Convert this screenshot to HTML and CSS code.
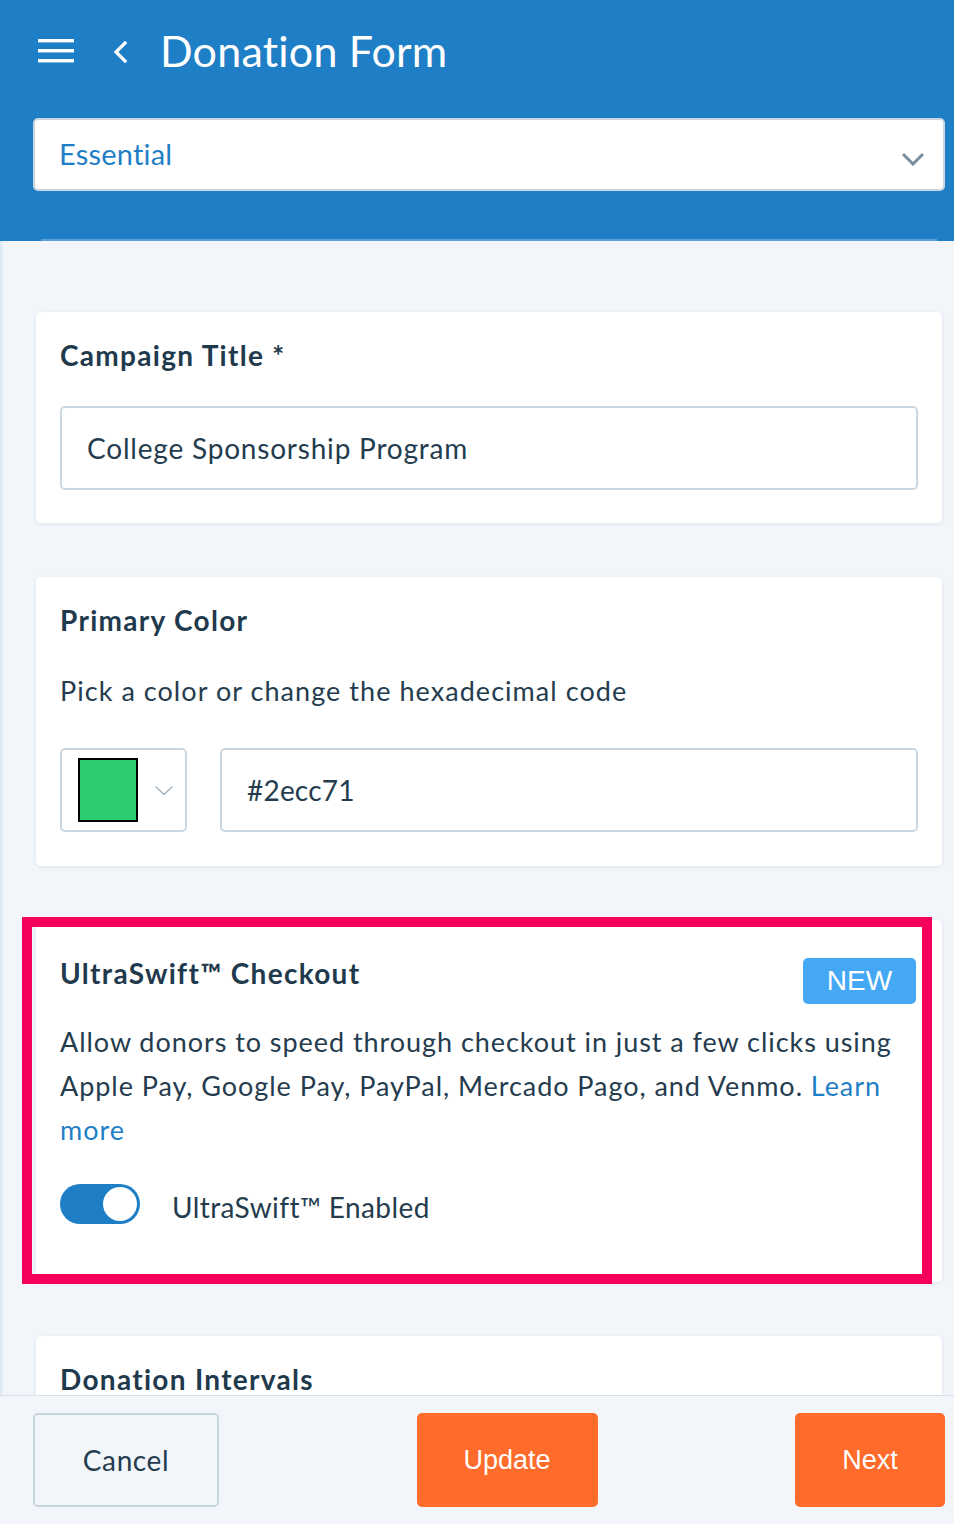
FILE: index.html
```html
<!DOCTYPE html>
<html lang="en">
<head>
<meta charset="utf-8">
<title>Donation Form</title>
<link rel="stylesheet" href="styles.css">
</head>
<body>
<header class="topbar">
  <div class="topbar-row">
    <button class="icon-btn menu" aria-label="Menu">
      <svg width="36" height="24" viewBox="0 0 36 24"><rect x="0" y="0" width="36" height="3.4" fill="#fff"/><rect x="0" y="10" width="36" height="3.4" fill="#fff"/><rect x="0" y="20" width="36" height="3.4" fill="#fff"/></svg>
    </button>
    <button class="icon-btn back" aria-label="Back">
      <svg width="16" height="22" viewBox="0 0 16 22"><path d="M13 2 L4 11 L13 20" fill="none" stroke="#fff" stroke-width="3.2" stroke-linecap="square"/></svg>
    </button>
    <h1 class="page-title">Donation Form</h1>
  </div>
  <div class="plan-select">
    <span class="plan-value">Essential</span>
    <svg class="plan-chevron" width="24" height="14" viewBox="0 0 24 14"><path d="M2 2 L12 12 L22 2" fill="none" stroke="#7b8d9b" stroke-width="3"/></svg>
  </div>
  <div class="topbar-edge"></div>
</header>

<main class="content">
  <section class="card">
    <h2 class="card-title">Campaign Title *</h2>
    <div class="text-input gap-input">College Sponsorship Program</div>
  </section>

  <section class="card card-color">
    <h2 class="card-title">Primary Color</h2>
    <p class="card-desc">Pick a color or change the hexadecimal code</p>
    <div class="color-row">
      <div class="swatch-picker">
        <span class="swatch"></span>
        <svg width="20" height="11" viewBox="0 0 20 11"><path d="M1.5 1.5 L10 9.5 L18.5 1.5" fill="none" stroke="#a3b3c0" stroke-width="1.6"/></svg>
      </div>
      <div class="text-input hex-input">#2ecc71</div>
    </div>
  </section>

  <section class="card card-featured">
    <div class="card-head">
      <h2 class="card-title">UltraSwift™ Checkout</h2>
      <span class="badge">NEW</span>
    </div>
    <p class="card-desc wrap">Allow donors to speed through checkout in just a few clicks using Apple Pay, Google Pay, PayPal, Mercado Pago, and Venmo. <a class="link" href="#">Learn more</a></p>
    <div class="toggle-row">
      <span class="toggle"><span class="knob"></span></span>
      <span class="toggle-label">UltraSwift™ Enabled</span>
    </div>
    <div class="highlight"></div>
  </section>

  <section class="card card-last">
    <h2 class="card-title">Donation Intervals</h2>
  </section>
</main>

<footer class="actions">
  <button class="btn btn-outline">Cancel</button>
  <button class="btn btn-primary btn-update">Update</button>
  <button class="btn btn-primary btn-next">Next</button>
</footer>
</body>
</html>
```
FILE: styles.css
```css
* { box-sizing: border-box; }
html, body { margin: 0; padding: 0; }
body {
  background: #f2f6fa;
  font-family: Lato, "Noto Sans", sans-serif;
  color: #1f3a4d;
  width: 954px;
  min-height: 1524px;
  overflow: hidden;
  box-shadow: inset 3px 0 3px -1px #d9e6f3;
}

.topbar {
  background: #1f7fc6;
  height: 241px;
  padding: 0 9px 0 33px;
  display: flex;
  flex-direction: column;
  position: relative;
}
.topbar-row {
  height: 102px;
  display: flex;
  align-items: center;
}
.icon-btn {
  background: none;
  border: 0;
  padding: 0;
  display: flex;
  align-items: center;
}
.menu { margin-left: 5px; }
.back { margin-left: 38px; margin-top: 1px; }
.page-title {
  margin: -2px 0 0 32px;
  font-weight: 400;
  font-size: 43px;
  color: #fff;
  line-height: 1;
  letter-spacing: 0.2px;
}
.plan-select {
  margin-top: 16px;
  height: 73px;
  background: #fff;
  border: 2px solid #c9d6e1;
  border-radius: 5px;
  display: flex;
  align-items: center;
  justify-content: space-between;
  padding: 0 18px 0 24px;
}
.plan-value {
  color: #1f7fc6;
  font-size: 29px;
  margin-top: -2px;
  letter-spacing: 0.2px;
}
.plan-chevron { margin-top: 8px; }
.topbar-edge {
  position: absolute;
  left: 41px;
  right: 17px;
  bottom: 0;
  height: 2px;
  background: #5d9fd6;
}

.content {
  padding: 71px 12px 200px 36px;
  display: flex;
  flex-direction: column;
  gap: 54px;
}
.card {
  background: #fff;
  border-radius: 5px;
  box-shadow: 0 1px 4px rgba(120, 150, 180, 0.18);
  padding: 26px 24px 33px 24px;
  position: relative;
}
.card-title {
  margin: 0;
  font-size: 28px;
  line-height: 34px;
  font-weight: 700;
  color: #1f3a4d;
  letter-spacing: 1.3px;
}
.text-input {
  height: 84px;
  border: 2px solid #cbd8e2;
  border-radius: 5px;
  background: #fff;
  display: flex;
  align-items: center;
  padding-left: 25px;
  font-size: 28px;
  color: #243c4e;
  letter-spacing: 0.8px;
}
.gap-input { margin-top: 34px; }

.card-desc {
  margin: 32px 0 0 0;
  font-size: 27px;
  line-height: 44px;
  color: #243c4e;
  letter-spacing: 1.05px;
}
.card-color { padding-bottom: 34px; }
.color-row {
  margin-top: 35px;
  display: flex;
  gap: 33px;
}
.swatch-picker {
  width: 127px;
  height: 84px;
  border: 2px solid #cbd8e2;
  border-radius: 5px;
  display: flex;
  align-items: center;
  padding-left: 16px;
  gap: 16px;
}
.swatch {
  width: 60px;
  height: 64px;
  background: #2ecc71;
  border: 2px solid #000;
}
.hex-input { flex: 1; letter-spacing: 0.2px; }

.card-featured { padding-top: 36px; padding-bottom: 58px; }
.card-head {
  display: flex;
  justify-content: space-between;
  align-items: flex-start;
}
.badge {
  margin-top: 2px;
  margin-right: 2px;
  width: 113px;
  height: 46px;
  background: #44a8f5;
  color: #fff;
  border-radius: 5px;
  font-family: "Liberation Sans", Arial, sans-serif;
  font-size: 28px;
  display: flex;
  align-items: center;
  justify-content: center;
}
.card-desc.wrap { margin-top: 16px; letter-spacing: 0.95px; }
.link { color: #1f7fc6; text-decoration: none; }
.toggle-row {
  margin-top: 32px;
  display: flex;
  align-items: center;
  gap: 32px;
}
.toggle {
  width: 80px;
  height: 40px;
  border-radius: 20px;
  background: #1f7fc6;
  display: flex;
  align-items: center;
  justify-content: flex-end;
  padding-right: 3px;
}
.knob {
  width: 34px;
  height: 34px;
  border-radius: 50%;
  background: #fff;
}
.toggle-label {
  font-size: 28px;
  color: #243c4e;
  letter-spacing: 0.4px;
  margin-top: 6px;
}
.highlight {
  position: absolute;
  left: -14px;
  top: -3px;
  right: 10px;
  bottom: -2px;
  border: 10px solid #f5005a;
  pointer-events: none;
}
.card-last { height: 200px; }

.actions {
  position: fixed;
  left: 0;
  bottom: 0;
  width: 954px;
  height: 129px;
  background: #f2f6fa;
  border-top: 1px solid #d4e0eb;
  display: flex;
  justify-content: space-between;
  align-items: flex-start;
  padding: 17px 9px 0 33px;
}
.btn {
  height: 94px;
  border-radius: 5px;
  font-size: 28px;
  cursor: pointer;
}
.btn-outline {
  width: 186px;
  background: transparent;
  border: 2px solid #c9d6e0;
  color: #243c4e;
  font-family: Lato, sans-serif;
  letter-spacing: 0.6px;
}
.btn-primary {
  background: #ff6b2b;
  border: 0;
  color: #fff;
  font-family: "Liberation Sans", Arial, sans-serif;
  font-size: 27px;
}
.btn-update { width: 181px; }
.btn-next { width: 150px; }
```
